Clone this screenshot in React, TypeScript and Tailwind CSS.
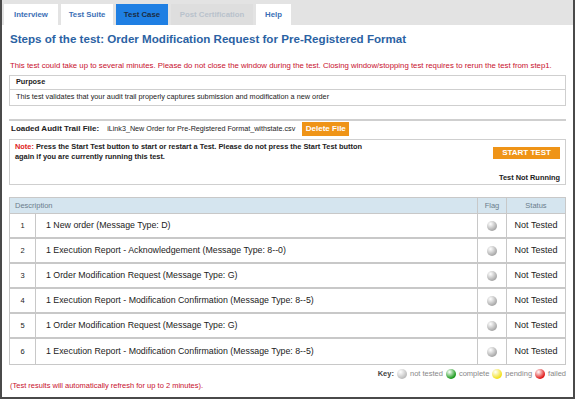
const rows = [
  "1 New order (Message Type: D)",
  "1 Execution Report - Acknowledgement (Message Type: 8--0)",
  "1 Order Modification Request (Message Type: G)",
  "1 Execution Report - Modification Confirmation (Message Type: 8--5)",
  "1 Order Modification Request (Message Type: G)",
  "1 Execution Report - Modification Confirmation (Message Type: 8--5)",
]

const Ball = ({ color }: { color: string }) => (
  <span
    className="inline-block h-[10px] w-[10px] rounded-full align-middle"
    style={{ background: `radial-gradient(circle at 35% 30%, #ffffff 0%, ${color} 70%)` }}
  />
)

export default function App() {
  return (
    <div
      className="h-[399px] w-[575px] overflow-hidden border-x-2 border-b-2 border-[#4a4a4a] bg-white text-[#222]"
      style={{ fontFamily: '"Liberation Sans", Arial, sans-serif' }}
    >
      {/* tabs */}
      <div className="flex h-[25px] items-end gap-[3px] bg-[#e3e3e3] pl-[2px] text-[7.8px] font-bold">
        <div className="flex h-[21px] w-[54px] items-center justify-center bg-white text-[#3c6fb6]">Interview</div>
        <div className="flex h-[21px] w-[52px] items-center justify-center bg-white text-[#3c6fb6]">Test Suite</div>
        <div className="flex h-[21px] w-[52px] items-center justify-center bg-[#1f7fe3] text-[#1b2c44]">Test Case</div>
        <div className="flex h-[21px] w-[82px] items-center justify-center bg-[#dedede] text-[#b9c2cc]">Post Certification</div>
        <div className="flex h-[21px] w-[35px] items-center justify-center bg-white text-[#3c6fb6]">Help</div>
      </div>

      <div className="px-[7px]">
        <h1 className="mt-[6px] ml-[1px] text-[11.6px] font-bold leading-[16px] text-[#2b62a3]">
          Steps of the test: Order Modification Request for Pre-Registered Format
        </h1>
        <p className="mt-[14px] ml-[1px] whitespace-nowrap text-[7.8px] leading-[10px] text-[#c8102e]">
          This test could take up to several minutes. Please do not close the window during the test. Closing window/stopping test requires to rerun the test from step1.
        </p>

        {/* purpose */}
        <div className="mt-[4px] border border-[#cfcfcf] text-[7.3px]">
          <div className="flex h-[14px] items-center border-b border-[#cfcfcf] px-[6px] font-bold">Purpose</div>
          <div className="flex h-[15px] items-center px-[6px]">
            This test validates that your audit trail properly captures submission and modification a new order
          </div>
        </div>

        {/* audit file */}
        <div className="mt-[13px] flex h-[18px] items-center border-t-2 border-[#cfcfcf]">
          <span className="ml-[2px] text-[8px] font-bold">Loaded Audit Trail File:</span>
          <span className="ml-[8px] text-[7.2px]">iLink3_New Order for Pre-Registered Format_withstate.csv</span>
          <span className="ml-[7px] flex h-[14px] w-[47px] items-center justify-center bg-[#ef9417] text-[8px] font-bold text-white">Delete File</span>
        </div>

        {/* note */}
        <div className="mt-[2px] flex h-[46px] justify-between border border-[#cfcfcf] px-[5px] pt-[2px] text-[7.4px] font-bold">
          <p className="w-[350px] leading-[10px]">
            <span className="text-[#e0231b]">Note:</span> Press the Start Test button to start or restart a Test. Please do not press the Start Test button again if you are currently running this test.
          </p>
          <div className="flex flex-col items-end">
            <span className="mt-[5px] flex h-[12px] w-[67px] items-center justify-center bg-[#ef9417] text-[8px] font-bold text-white">START TEST</span>
            <span className="mt-[13px]">Test Not Running</span>
          </div>
        </div>

        {/* table */}
        <table className="mt-[12px] w-full border-separate border-spacing-0 border border-[#c8c8c8] text-[8.8px]">
          <thead>
            <tr className="bg-[#d5e5ef] text-[7.5px] text-[#6b7d8c]">
              <th className="h-[16px] border-r border-b border-[#c8c8c8] px-[5px] text-left font-normal" colSpan={2}>Description</th>
              <th className="w-[29px] border-r border-b border-[#c8c8c8] font-normal">Flag</th>
              <th className="w-[58px] border-b border-[#c8c8c8] font-normal">Status</th>
            </tr>
          </thead>
          <tbody>
            {rows.map((r, i) => (
              <tr key={i}>
                <td className={`h-[25px] w-[26px] border-r border-[#c8c8c8] text-center text-[7.5px] ${i < rows.length - 1 ? "border-b-2" : ""}`}>{i + 1}</td>
                <td className={`border-r border-[#c8c8c8] pl-[10px] ${i < rows.length - 1 ? "border-b-2" : ""}`}>{r}</td>
                <td className={`border-r border-[#c8c8c8] text-center ${i < rows.length - 1 ? "border-b-2" : ""}`}><Ball color="#a9a9a9" /></td>
                <td className={`border-[#c8c8c8] text-center text-[9px] ${i < rows.length - 1 ? "border-b-2" : ""}`}>Not Tested</td>
              </tr>
            ))}
          </tbody>
        </table>

        {/* key */}
        <div className="mt-[4px] flex h-[10px] items-center justify-end gap-[3px] text-[7.5px] text-[#888]">
          <span className="font-bold text-[#444]">Key:</span>
          <Ball color="#bdbdbd" /><span>not tested</span>
          <Ball color="#1a9a1a" /><span>complete</span>
          <Ball color="#f2e01c" /><span>pending</span>
          <Ball color="#e01a1a" /><span>failed</span>
        </div>
        <p className="mt-[2px] ml-[1px] text-[7.5px] leading-[10px] text-[#c8102e]">(Test results will automatically refresh for up to 2 minutes).</p>
      </div>
    </div>
  )
}
